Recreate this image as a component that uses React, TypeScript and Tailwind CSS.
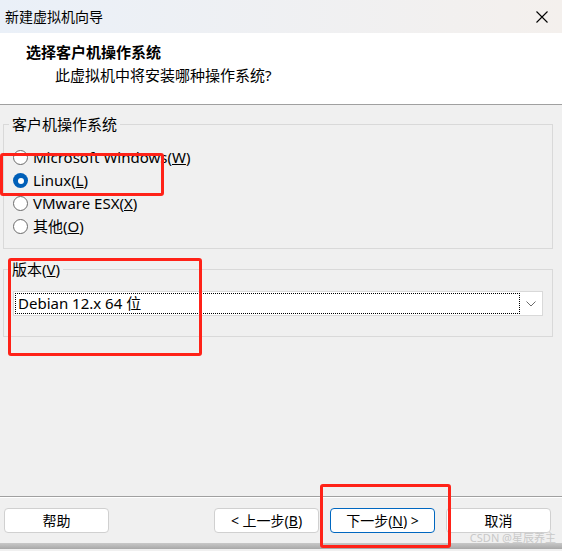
import React, { useState } from "react";

const font = { fontFamily: '"Noto Sans", "Noto Sans CJK SC", sans-serif' };

// ラジオボタンの選択肢
const osList = [
  { id: "win", label: "Microsoft Windows", key: "W" },
  { id: "linux", label: "Linux", key: "L" },
  { id: "esx", label: "VMware ESX", key: "X" },
  { id: "other", label: "其他", key: "O" },
];

function Radio({ checked }: { checked: boolean }) {
  if (checked) {
    return (
      <span className="w-[15px] h-[15px] rounded-full bg-[#005fb8] flex items-center justify-center">
        <span className="w-[6px] h-[6px] rounded-full bg-white" />
      </span>
    );
  }
  return <span className="w-[15px] h-[15px] rounded-full border border-[#6b6b6b] bg-white" />;
}

function Btn({ children, primary }: { children: React.ReactNode; primary?: boolean }) {
  return (
    <button
      className={
        primary
          ? "w-[105px] h-[25px] rounded-[4px] bg-white border border-[#0067c0] text-[14px] text-black"
          : "w-[105px] h-[25px] rounded-[4px] bg-white border border-[#d0d0d0] text-[14px] text-black"
      }
    >
      {children}
    </button>
  );
}

export default function App() {
  const [os, setOs] = useState("linux");

  return (
    <div className="relative w-[562px] h-[551px] overflow-hidden bg-[#f0f0f0] text-black" style={font}>
      {/* タイトルバー */}
      <div className="h-[33px] flex items-center justify-between pl-[5px] pr-[14px] bg-gradient-to-r from-[#eaf0f8] to-[#f4f0ed]">
        <span className="text-[14px]">新建虚拟机向导</span>
        <svg width="12" height="12" viewBox="0 0 12 12" className="text-black">
          <path d="M0.5 0.5 L11.5 11.5 M11.5 0.5 L0.5 11.5" stroke="currentColor" strokeWidth="1.1" />
        </svg>
      </div>

      {/* ヘッダー */}
      <div className="h-[72px] bg-white border-b border-[#a0a0a0] pt-[8px]">
        <div className="pl-[26px] text-[15px] font-bold leading-[22px]">选择客户机操作系统</div>
        <div className="pl-[55px] text-[15px] leading-[22px] mt-[1px]">此虚拟机中将安装哪种操作系统?</div>
      </div>

      {/* 本体 */}
      <div className="h-[391px] px-[3px] pt-[11px] pr-[9px]">
        <fieldset className="h-[133px] border border-[#d9d9d9] px-[9px]">
          <legend className="text-[15px] leading-[16px] ml-[-4px] px-[3px]">客户机操作系统</legend>
          <div className="pt-[14px] flex flex-col">
            {osList.map((o) => (
              <label
                key={o.id}
                className="h-[23px] flex items-center gap-[5px] text-[15px] cursor-default"
                onClick={() => setOs(o.id)}
              >
                <Radio checked={os === o.id} />
                <span>
                  {o.label}(<u>{o.key}</u>)
                </span>
              </label>
            ))}
          </div>
        </fieldset>

        <fieldset className="mt-[12px] h-[76px] border border-[#d9d9d9] px-[9px]">
          <legend className="text-[15px] leading-[16px] ml-[-4px] px-[3px]">
            版本(<u>V</u>)
          </legend>
          <div className="mt-[14px] h-[25px] bg-white border border-[#d9d9d9] flex items-center pl-[1px]">
            <div className="flex-1 h-[21px] border border-dotted border-black flex items-center pl-[2px] text-[15px]">
              Debian 12.x 64 位
            </div>
            <div className="w-[22px] flex items-center justify-center">
              <svg width="10" height="6" viewBox="0 0 10 6">
                <path d="M0.5 0.5 L5 5 L9.5 0.5" fill="none" stroke="#6b6b6b" strokeWidth="1" />
              </svg>
            </div>
          </div>
        </fieldset>
      </div>

      {/* 下部ボタン */}
      <div className="border-t border-[#a0a0a0]">
        <div className="border-t border-white h-[46px] flex items-start pt-[10px] pl-[4px] pr-[11px]">
          <Btn>帮助</Btn>
          <div className="ml-auto flex gap-[11px]">
            <Btn>
              &lt; 上一步(<u>B</u>)
            </Btn>
            <Btn primary>
              下一步(<u>N</u>) &gt;
            </Btn>
            <Btn>取消</Btn>
          </div>
        </div>
      </div>
      <div className="h-[6px] bg-gradient-to-b from-[#c8c8c8] to-[#a8a8a8]" />

      {/* 赤枠の注釈 */}
      <div className="absolute left-0 top-[153px] w-[164px] h-[43px] border-[3px] border-[#ff2218] rounded-[3px]" />
      <div className="absolute left-[8px] top-[258px] w-[194px] h-[98px] border-[3px] border-[#ff2218] rounded-[3px]" />
      <div className="absolute left-[320px] top-[484px] w-[131px] h-[64px] border-[3px] border-[#ff2218] rounded-[3px]" />

      {/* 透かし */}
      <div className="absolute right-[6px] bottom-[5px] text-[11px] text-[#c8c8c8]">CSDN @星辰养主</div>
    </div>
  );
}
